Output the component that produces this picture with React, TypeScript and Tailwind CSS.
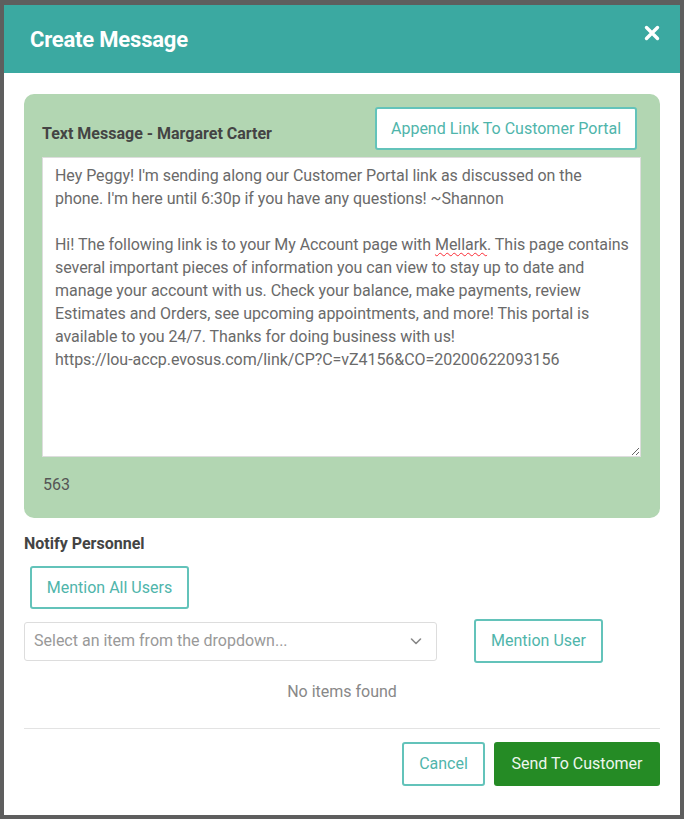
import React from "react";

const teal = "border-[#63c3ba] text-[#4fb5ab]";

const Close = () => (
  <svg width="16" height="16" viewBox="0 0 16 16" aria-hidden="true">
    <path d="M2.5 2.5 L13.5 13.5 M13.5 2.5 L2.5 13.5" stroke="white" strokeWidth="3.4" strokeLinecap="round" />
  </svg>
);

const Chevron = () => (
  <svg width="14" height="14" viewBox="0 0 14 14" aria-hidden="true">
    <path d="M2.5 5 L7 9.5 L11.5 5" fill="none" stroke="#888" strokeWidth="1.6" strokeLinecap="round" strokeLinejoin="round" />
  </svg>
);

const App: React.FC = () => {
  return (
    <div className="h-[819px] w-[684px] overflow-hidden bg-[#5e5e5e] pt-[5px] pl-[4px] font-['Roboto',sans-serif]">
      <div className="w-[676px] h-[810px] bg-white flex flex-col">
        <header className="h-[68px] bg-[#3ba9a1] flex items-center justify-between pl-[26px] pr-[20px]">
          <h1 className="text-[22px] font-bold text-white tracking-[-0.2px]">Create Message</h1>
          <button className="mb-[12px]">
            <Close />
          </button>
        </header>

        <div className="px-[20px] pt-[21px]">
          <div className="bg-[#b2d6b2] rounded-[10px] px-[18px] pt-[13px] pb-[21px]">
            <div className="flex items-center justify-between">
              <span className="pt-[10px] text-[16px] font-bold text-[#444]">Text Message - Margaret Carter</span>
              <button className={`mr-[5px] h-[43px] w-[262px] bg-white border-2 rounded-[3px] text-[16px] ${teal}`}>
                Append Link To Customer Portal
              </button>
            </div>
            <div className="mt-[7px] h-[300px] w-[599px] bg-white border border-[#ddd] resize overflow-hidden pl-[12px] pr-[6px] pt-[6px] text-[16px] leading-[23px] text-[#6a6a6a] whitespace-pre tracking-[-0.05px]">
              {"Hey Peggy! I'm sending along our Customer Portal link as discussed on the\nphone. I'm here until 6:30p if you have any questions! ~Shannon\n\nHi! The following link is to your My Account page with "}
              <span className="underline decoration-wavy decoration-red-500 decoration-1 underline-offset-2">Mellark</span>
              {". This page contains\nseveral important pieces of information you can view to stay up to date and\nmanage your account with us. Check your balance, make payments, review\nEstimates and Orders, see upcoming appointments, and more! This portal is\navailable to you 24/7. Thanks for doing business with us!\nhttps://lou-accp.evosus.com/link/CP?C=vZ4156&CO=20200622093156"}
            </div>
            <div className="mt-[16px] text-[16px] leading-[24px] text-[#555] pl-[1px]">563</div>
          </div>

          <div className="mt-[14px] text-[16px] font-bold text-[#444]">Notify Personnel</div>
          <button className={`mt-[10px] ml-[6px] h-[43px] w-[159px] bg-white border-2 rounded-[3px] text-[16px] ${teal}`}>
            Mention All Users
          </button>

          <div className="mt-[10px] flex items-center">
            <div className="h-[39px] w-[413px] border border-[#ddd] rounded-[3px] flex items-center justify-between pl-[9px] pr-[13px] text-[16px] text-[#999]">
              <span>Select an item from the dropdown...</span>
              <Chevron />
            </div>
            <button className={`ml-[37px] h-[44px] w-[129px] bg-white border-2 rounded-[3px] text-[16px] ${teal}`}>
              Mention User
            </button>
          </div>

          <div className="mt-[17px] text-center text-[16px] leading-[24px] text-[#888]">No items found</div>

          <div className="mt-[24px] border-t border-[#e3e3e3]" />

          <div className="mt-[13px] flex justify-end gap-[9px]">
            <button className={`h-[44px] w-[83px] bg-white border-2 rounded-[3px] text-[16px] ${teal}`}>Cancel</button>
            <button className="h-[44px] w-[166px] bg-[#258b25] rounded-[3px] text-[16px] text-[#eef7ee]">Send To Customer</button>
          </div>
        </div>
      </div>
    </div>
  );
};

export default App;
